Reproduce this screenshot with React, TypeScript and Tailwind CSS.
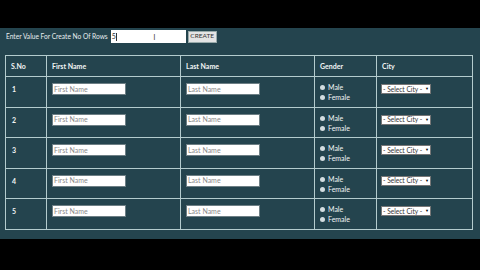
import React from "react"

const rows = [1, 2, 3, 4, 5]

function TextBox({ placeholder }: { placeholder: string }) {
  return (
    <div className="flex h-[12px] w-[74px] items-center border border-[#6d7f85] bg-white pl-[1px] text-[7px] leading-none text-[#8a8a8a]">
      {placeholder}
    </div>
  )
}

export default function App() {
  return (
    <div
      className="flex h-[270px] w-[480px] flex-col bg-black"
      style={{ fontFamily: "Lato, 'Open Sans', sans-serif" }}
    >
      <div className="h-[28px] shrink-0" />
      <div className="flex h-[211px] shrink-0 flex-col bg-[#24444e]">
        <div className="flex items-center gap-[2px] pl-[6px] pt-[2px]">
          <span className="text-[6.6px] leading-none text-[#e8eef0]">Enter Value For Create No Of Rows</span>
          <div className="ml-[1px] flex h-[13px] w-[75px] items-center bg-white pl-[1px] text-[7px] leading-none text-[#333]">
            5<span className="ml-[0.5px] h-[8px] w-px bg-[#333]" />
            <span className="ml-[36px] text-[8px] text-[#555]">I</span>
          </div>
          <div className="flex h-[12px] w-[29px] items-center justify-center border border-[#9aa] bg-[#e4e4e4] text-[6.5px] leading-none text-[#333]">
            CREATE
          </div>
        </div>

        <table className="ml-[5px] mt-[12px] w-[467px] table-fixed border-collapse border border-[#b4ccce] text-[7px] text-[#f2f5f5]">
          <colgroup>
            <col className="w-[41px]" />
            <col className="w-[134px]" />
            <col className="w-[134px]" />
            <col className="w-[62px]" />
            <col className="w-[96px]" />
          </colgroup>
          <thead>
            <tr className="h-[21px]">
              {["S.No", "First Name", "Last Name", "Gender", "City"].map((h) => (
                <th key={h} className="border border-[#b4ccce] pl-[5px] text-left font-bold">
                  {h}
                </th>
              ))}
            </tr>
          </thead>
          <tbody>
            {rows.map((n) => (
              <tr key={n} className="h-[30.6px] align-top">
                <td className="border border-[#b4ccce] pl-[6px] pt-[9px] font-bold leading-none">{n}</td>
                <td className="border border-[#b4ccce] pl-[5px] pt-[6px]">
                  <TextBox placeholder="First Name" />
                </td>
                <td className="border border-[#b4ccce] pl-[5px] pt-[6px]">
                  <TextBox placeholder="Last Name" />
                </td>
                <td className="border border-[#b4ccce] pl-[5px] pt-[7px]">
                  <div className="flex flex-col gap-[3px] leading-none">
                    <div className="flex items-center gap-[3px]">
                      <span className="h-[5px] w-[5px] rounded-full bg-[#d3dde0]" />
                      <span>Male</span>
                    </div>
                    <div className="flex items-center gap-[3px]">
                      <span className="h-[5px] w-[5px] rounded-full bg-[#d3dde0]" />
                      <span>Female</span>
                    </div>
                  </div>
                </td>
                <td className="border border-[#b4ccce] pl-[4px] pt-[7px]">
                  <div className="flex h-[10px] w-[50px] items-center justify-between border border-[#777] bg-white px-[1px] text-[6.6px] leading-none text-[#333]">
                    <span>- Select City -</span>
                    <span className="text-[4px] text-black">▼</span>
                  </div>
                </td>
              </tr>
            ))}
          </tbody>
        </table>
      </div>
    </div>
  )
}
